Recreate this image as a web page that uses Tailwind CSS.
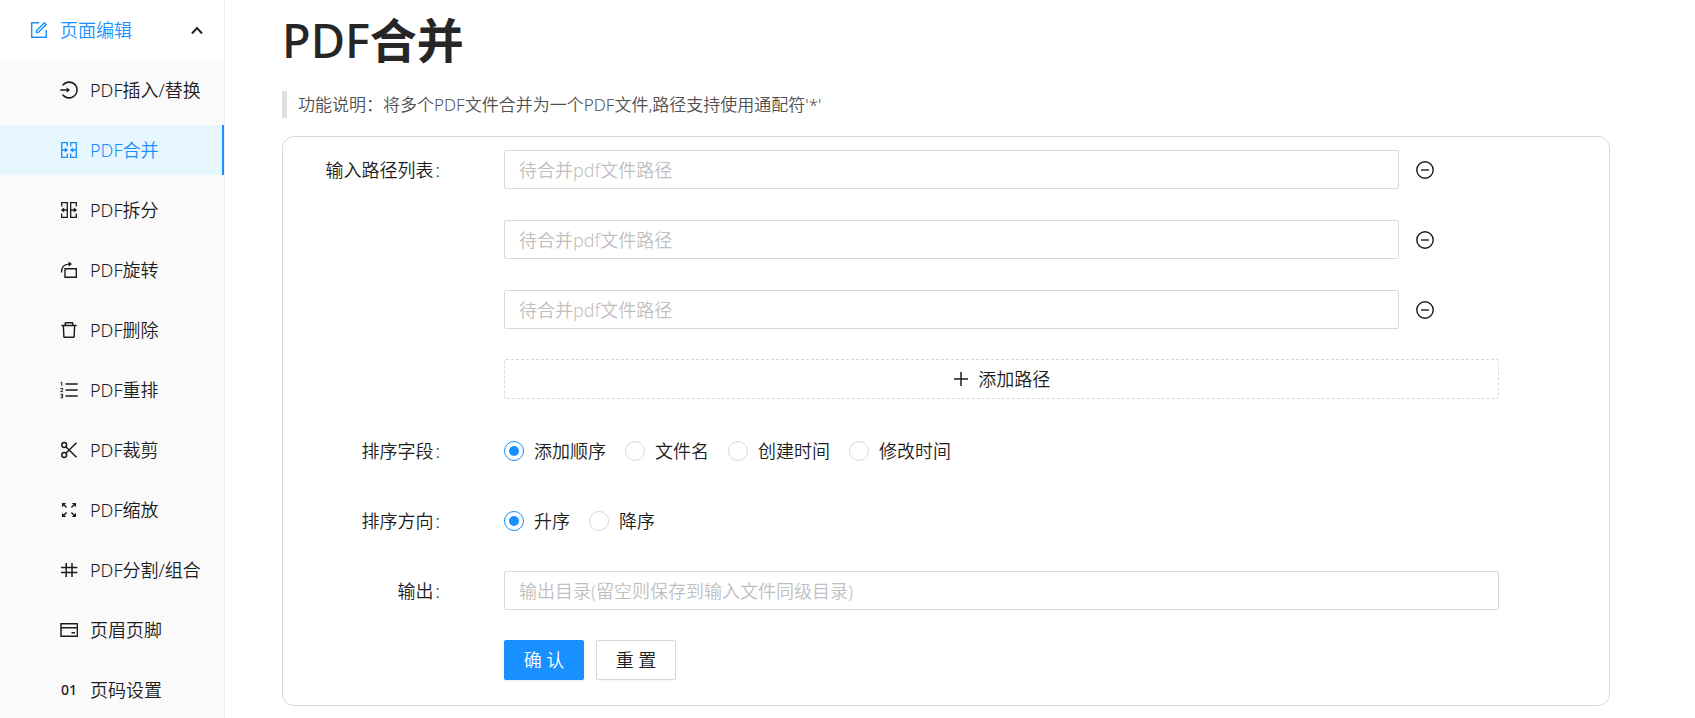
<!DOCTYPE html>
<html lang="zh-CN">
<head>
<meta charset="utf-8">
<title>PDF合并</title>
<script src="https://cdn.jsdelivr.net/npm/@tailwindcss/browser@4"></script>
</head>
<body class="flex h-screen overflow-hidden bg-white font-['Noto_Sans','Noto_Sans_CJK_SC',sans-serif] text-[18px] font-[350] leading-7 text-[#1c1c1c]">
<nav class="w-[225px] shrink-0 overflow-hidden border-r border-[#f0f0f0] bg-[#fafafa]">
  <button type="button" aria-expanded="true" class="flex h-[60px] w-full items-center bg-white pl-[30px] pr-[19px] text-[#1890ff]">
    <svg class="size-[18px]" viewBox="64 64 896 896" fill="currentColor"><path d="M904 512h-56c-4.400 0-8 3.600-8 8v320H184V184h320c4.400 0 8-3.600 8-8v-56c0-4.400-3.600-8-8-8H144c-17.700 0-32 14.300-32 32v736c0 17.700 14.300 32 32 32h736c17.700 0 32-14.300 32-32V520c0-4.400-3.600-8-8-8z"/><path d="M355.900 534.900L354 653.800c-.1 8.900 7.100 16.200 16 16.200h.4l118-2.900c2-.1 4-.9 5.400-2.300l415.900-415c3.100-3.100 3.100-8.200 0-11.300L785.400 114.300c-1.600-1.600-3.600-2.300-5.700-2.300s-4.100.8-5.700 2.300l-415.800 415a8.300 8.300 0 0 0-2.300 5.600zm63.500 23.600L779.700 199l45.200 45.100-360.500 359.700-45.700 1.100.7-46.400z"/></svg>
    <span class="ml-3">页面编辑</span>
    <svg class="ml-auto h-3 w-4 text-black/85" viewBox="0 0 16 12" fill="none" stroke="currentColor" stroke-width="2"><path d="M3 9.500l5-5.500 5 5.500"/></svg>
  </button>
  <ul class="flex flex-col gap-[10px] pt-[5px]">
    <li><a href="#" class="flex h-[50px] items-center gap-3 whitespace-nowrap pl-[60px]">
      <svg class="size-[18px]" viewBox="64 64 896 896" fill="currentColor"><path d="M521.700 82c-152.500-.4-286.700 78.500-363.400 197.700-3.400 5.300.4 12.300 6.700 12.300h70.300c4.800 0 9.300-2.100 12.300-5.800 7-8.500 14.500-16.700 22.400-24.500 32.600-32.500 70.500-58.100 112.700-75.900 43.600-18.400 90-27.800 137.900-27.800 47.900 0 94.300 9.300 137.900 27.800 42.200 17.800 80.100 43.400 112.700 75.900 32.600 32.500 58.100 70.400 76 112.500C865.700 417.800 875 464.100 875 512c0 47.900-9.400 94.200-27.800 137.800-17.800 42.100-43.400 80-76 112.500s-70.500 58.100-112.700 75.900A352.800 352.800 0 0 1 520.600 866c-47.900 0-94.300-9.400-137.900-27.800A353.840 353.840 0 0 1 270 762.300c-7.900-7.900-15.300-16.100-22.400-24.500-3-3.700-7.600-5.800-12.300-5.800H165c-6.300 0-10.200 7-6.700 12.300C234.900 863.200 368.500 942 520.600 942c236.200 0 428-190.100 430.400-425.600C953.400 277.100 761.300 82.600 521.700 82zM395 624v-76H81c-4.400 0-8-3.600-8-8v-56c0-4.400 3.600-8 8-8h314v-76c0-6.700 7.800-10.500 13-6.300l141.900 112a8 8 0 0 1 0 12.600L408 630.300c-5.200 4.100-13 .4-13-6.300z"/></svg>PDF插入/替换</a></li>
    <li><a href="#" aria-current="page" class="-mr-px flex h-[50px] items-center gap-3 border-r-3 border-[#1890ff] bg-[#e6f7ff] pl-[60px] text-[#1890ff]">
      <svg class="size-[18px]" viewBox="0 0 18 18" fill="none" stroke="currentColor" stroke-width="1.300"><path d="M7.300 5.500V1.600H1.700v14.800h5.600V12.500M10.700 5.500V1.600h5.600v14.800h-5.600V12.500M2 9h3M16 9h-3"/><path d="M4.800 6.400L8.200 9l-3.400 2.600zM13.200 6.400L9.800 9l3.400 2.600z" fill="currentColor" stroke="none"/></svg>PDF合并</a></li>
    <li><a href="#" class="flex h-[50px] items-center gap-3 pl-[60px]">
      <svg class="size-[18px]" viewBox="0 0 18 18" fill="none" stroke="currentColor" stroke-width="1.300"><path d="M1.700 5.500V1.600h5.600v14.800H1.700V12.500M16.300 5.500V1.600h-5.600v14.800h5.600V12.500M7 9H4M11 9h3"/><path d="M4.200 6.400L.8 9l3.400 2.600zM13.800 6.400L17.200 9l-3.400 2.600z" fill="currentColor" stroke="none"/></svg>PDF拆分</a></li>
    <li><a href="#" class="flex h-[50px] items-center gap-3 pl-[60px]">
      <svg class="size-[18px]" viewBox="0 0 18 18" fill="none" stroke="currentColor" stroke-width="1.400"><path d="M5 7.700h11.300v8.600H5zM1.500 11.500C1.300 6.200 4 3.200 9 3.100"/><path d="M8.600.5l3.400 2.600-3.400 2.600z" fill="currentColor" stroke="none"/></svg>PDF旋转</a></li>
    <li><a href="#" class="flex h-[50px] items-center gap-3 pl-[60px]">
      <svg class="size-[18px]" viewBox="64 64 896 896" fill="currentColor"><path d="M360 184h-8c4.400 0 8-3.600 8-8v8h304v-8c0 4.400 3.600 8 8 8h-8v72h72v-80c0-35.300-28.700-64-64-64H352c-35.300 0-64 28.700-64 64v80h72v-72zm504 72H160c-17.700 0-32 14.300-32 32v32c0 4.400 3.600 8 8 8h60.400l24.700 523c1.600 34.100 29.800 61 63.900 61h454c34.200 0 62.300-26.800 63.900-61l24.700-523H888c4.400 0 8-3.600 8-8v-32c0-17.700-14.300-32-32-32zM731.300 840H292.700l-24.200-512h487l-24.200 512z"/></svg>PDF删除</a></li>
    <li><a href="#" class="flex h-[50px] items-center gap-3 pl-[60px]">
      <svg class="size-[18px]" viewBox="0 0 18 18" fill="none" stroke="currentColor"><path d="M5.500 3h12.200M5.500 9h12.200M5.500 15h12.200" stroke-width="1.500"/><path d="M.5 1.700l1.300-.5v3.600M.5 7.500h2.200v1.200L.7 10.600h2.200M.5 13.300h2.100v3.500H.5M1 15h1.600"/></svg>PDF重排</a></li>
    <li><a href="#" class="flex h-[50px] items-center gap-3 pl-[60px]">
      <svg class="size-[18px]" viewBox="0 0 18 18" fill="none" stroke="currentColor" stroke-width="1.500"><circle cx="4.200" cy="4" r="2.400"/><circle cx="4.200" cy="14" r="2.400"/><path d="M5.800 5.800L16.500 16.300M5.800 12.200L16.500 1.700"/></svg>PDF裁剪</a></li>
    <li><a href="#" class="flex h-[50px] items-center gap-3 pl-[60px]">
      <svg class="size-[18px]" viewBox="0 0 18 18" fill="none" stroke="currentColor" stroke-width="1.400"><path d="M3 3l3.600 3.600M15 3l-3.600 3.600M3 15l3.600-3.600M15 15l-3.600-3.600"/><path d="M2 2h4.200L2 6.200zM16 2h-4.200L16 6.200zM2 16h4.200L2 11.800zM16 16h-4.200l4.200-4.200z" fill="currentColor" stroke="none"/></svg>PDF缩放</a></li>
    <li><a href="#" class="flex h-[50px] items-center gap-3 whitespace-nowrap pl-[60px]">
      <svg class="size-[18px]" viewBox="0 0 18 18" fill="none" stroke="currentColor" stroke-width="1.500"><path d="M1 6.500h16.300M1 11.500h16.300M6.200 2v14M12 2v14"/></svg>PDF分割/组合</a></li>
    <li><a href="#" class="flex h-[50px] items-center gap-3 pl-[60px]">
      <svg class="size-[18px]" viewBox="0 0 18 18" fill="none" stroke="currentColor" stroke-width="1.500"><path d="M1 2.700h16.400v12.600H1zM1 6.700h16.400M11.500 11.700h3.500"/></svg>页眉页脚</a></li>
    <li><a href="#" class="flex h-[50px] items-center gap-3 pl-[60px]">
      <svg class="size-[18px]" viewBox="0 0 18 18" fill="currentColor"><text x="9" y="14" text-anchor="middle" class="text-[14px] font-medium">01</text></svg>页码设置</a></li>
  </ul>
</nav>
<main class="min-w-0 flex-1 pl-[57px] pr-[85px]">
  <h1 class="pt-[9px] text-[47px] leading-[62px] text-[#262626]"><span class="font-medium">PDF</span><span class="font-bold">合并</span></h1>
  <blockquote class="mt-5 border-l-5 border-[#e0e0e0] pl-[11px] text-[17px] leading-[27px] text-[#505050]">功能说明：将多个PDF文件合并为一个PDF文件,路径支持使用通配符'*'</blockquote>
  <form class="mt-[18px] grid grid-cols-24 gap-y-[30px] rounded-xl border border-[#d9d9d9] pt-[12px] pb-[25px]">
    <label for="p1" class="col-span-4 flex h-[42px] items-center justify-end pr-[64px]">输入路径列表<span class="ml-[2px]">:</span></label>
    <div class="col-span-20 grid grid-cols-20 gap-y-[30px] pb-[2px]">
      <div class="col-span-18 flex h-10 items-end"><input id="p1" type="text" placeholder="待合并pdf文件路径" class="h-[39px] w-[90%] rounded-xs border border-[#d9d9d9] px-[14px] placeholder:text-[#bfbfbf]"><button type="button" aria-label="删除路径" class="ml-[17px] flex h-[39px] items-center"><svg class="size-[18px]" viewBox="0 0 18 18" fill="none" stroke="currentColor" stroke-width="1.400"><circle cx="9" cy="9" r="8.200"/><path d="M5 9h8"/></svg></button></div>
      <div class="col-span-18 flex h-10 items-end"><input type="text" aria-label="输入路径 2" placeholder="待合并pdf文件路径" class="h-[39px] w-[90%] rounded-xs border border-[#d9d9d9] px-[14px] placeholder:text-[#bfbfbf]"><button type="button" aria-label="删除路径" class="ml-[17px] flex h-[39px] items-center"><svg class="size-[18px]" viewBox="0 0 18 18" fill="none" stroke="currentColor" stroke-width="1.400"><circle cx="9" cy="9" r="8.200"/><path d="M5 9h8"/></svg></button></div>
      <div class="col-span-18 flex h-10 items-end"><input type="text" aria-label="输入路径 3" placeholder="待合并pdf文件路径" class="h-[39px] w-[90%] rounded-xs border border-[#d9d9d9] px-[14px] placeholder:text-[#bfbfbf]"><button type="button" aria-label="删除路径" class="ml-[17px] flex h-[39px] items-center"><svg class="size-[18px]" viewBox="0 0 18 18" fill="none" stroke="currentColor" stroke-width="1.400"><circle cx="9" cy="9" r="8.200"/><path d="M5 9h8"/></svg></button></div>
      <button type="button" class="col-span-18 flex h-10 items-center justify-center gap-2 rounded-xs border border-dashed border-[#d9d9d9]"><svg class="size-[18px]" viewBox="0 0 18 18" fill="none" stroke="currentColor" stroke-width="1.500"><path d="M9 2v14M2 9h14"/></svg>添加路径</button>
    </div>
    <div id="sf" class="col-span-4 flex h-10 items-center justify-end pr-[64px]">排序字段<span class="ml-[2px]">:</span></div>
    <div role="radiogroup" aria-labelledby="sf" class="col-span-18 flex h-10 items-center gap-[19px]">
      <label class="flex items-center gap-[10px]"><input type="radio" name="field" checked class="size-5 appearance-none rounded-full border border-[#d9d9d9] p-1 checked:border-[#1890ff] checked:bg-[#1890ff] checked:bg-clip-content">添加顺序</label>
      <label class="flex items-center gap-[10px]"><input type="radio" name="field" class="size-5 appearance-none rounded-full border border-[#d9d9d9] p-1 checked:border-[#1890ff] checked:bg-[#1890ff] checked:bg-clip-content">文件名</label>
      <label class="flex items-center gap-[10px]"><input type="radio" name="field" class="size-5 appearance-none rounded-full border border-[#d9d9d9] p-1 checked:border-[#1890ff] checked:bg-[#1890ff] checked:bg-clip-content">创建时间</label>
      <label class="flex items-center gap-[10px]"><input type="radio" name="field" class="size-5 appearance-none rounded-full border border-[#d9d9d9] p-1 checked:border-[#1890ff] checked:bg-[#1890ff] checked:bg-clip-content">修改时间</label>
    </div>
    <div id="sd" class="col-span-4 col-start-1 flex h-10 items-center justify-end pr-[64px]">排序方向<span class="ml-[2px]">:</span></div>
    <div role="radiogroup" aria-labelledby="sd" class="col-span-18 flex h-10 items-center gap-[19px]">
      <label class="flex items-center gap-[10px]"><input type="radio" name="dir" checked class="size-5 appearance-none rounded-full border border-[#d9d9d9] p-1 checked:border-[#1890ff] checked:bg-[#1890ff] checked:bg-clip-content">升序</label>
      <label class="flex items-center gap-[10px]"><input type="radio" name="dir" class="size-5 appearance-none rounded-full border border-[#d9d9d9] p-1 checked:border-[#1890ff] checked:bg-[#1890ff] checked:bg-clip-content">降序</label>
    </div>
    <label for="out" class="col-span-4 col-start-1 flex h-[39px] items-center justify-end pr-[64px]">输出<span class="ml-[2px]">:</span></label>
    <div class="col-span-18 flex h-[39px] items-start"><input id="out" type="text" placeholder="输出目录(留空则保存到输入文件同级目录)" class="h-[39px] w-full rounded-xs border border-[#d9d9d9] px-[14px] placeholder:text-[#bfbfbf]"></div>
    <div class="col-span-18 col-start-5 flex gap-3">
      <button type="submit" class="h-10 w-20 rounded-xs bg-[#1890ff] text-white shadow-[0_2px_0_rgba(0,0,0,0.04)]">确 认</button>
      <button type="reset" class="h-10 w-20 rounded-xs border border-[#d9d9d9] shadow-[0_2px_0_rgba(0,0,0,0.02)]">重 置</button>
    </div>
  </form>
</main>
</body>
</html>
